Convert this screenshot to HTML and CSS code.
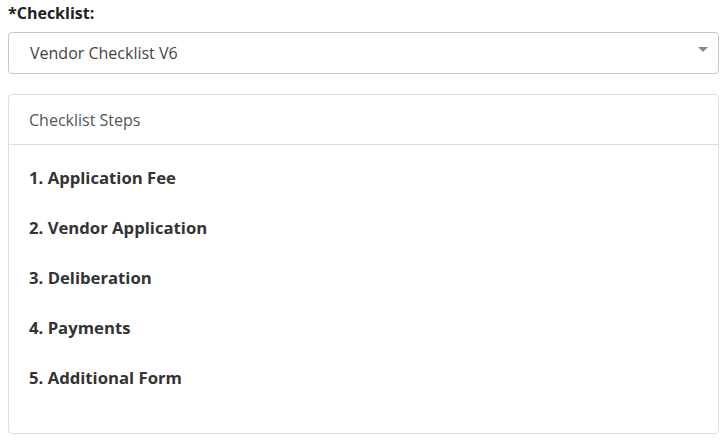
FILE: index.html
```html
<!DOCTYPE html>
<html>
<head>
<meta charset="utf-8">
<link rel="stylesheet" href="styles.css">
</head>
<body>
<div class="field">
  <label class="label">*Checklist:</label>
  <div class="select">
    <span class="select-value">Vendor Checklist V6</span>
    <span class="caret"></span>
  </div>
</div>
<div class="panel">
  <div class="panel-heading">Checklist Steps</div>
  <ul class="steps">
    <li>1. Application Fee</li>
    <li>2. Vendor Application</li>
    <li>3. Deliberation</li>
    <li>4. Payments</li>
    <li>5. Additional Form</li>
  </ul>
</div>
</body>
</html>
```
FILE: styles.css
```css
* { box-sizing: border-box; }
body {
  margin: 0;
  padding: 0 6px 0 8px;
  font-family: "Open Sans", "Noto Sans", sans-serif;
  color: #333;
  background: #fff;
}
.field { display: flex; flex-direction: column; }
.label {
  font-weight: 700;
  font-size: 16px;
  line-height: 26px;
  color: #222;
  height: 32px;
}
.select {
  height: 42px;
  border: 1px solid #c8c8c8;
  border-radius: 4px;
  display: flex;
  align-items: center;
  justify-content: space-between;
  padding: 0 10px 0 21px;
}
.select-value { font-size: 16px; color: #444; }
.caret {
  width: 0; height: 0;
  border-style: solid;
  border-width: 5px 5px 0 5px;
  border-color: #888 transparent transparent transparent;
  margin-top: -8px;
}
.panel {
  margin-top: 20px;
  border: 1px solid #ddd;
  border-radius: 4px;
  height: 340px;
}
.panel-heading {
  height: 50px;
  border-bottom: 1px solid #ddd;
  padding: 0 20px;
  display: flex;
  align-items: center;
  font-size: 16px;
  color: #555;
}
.steps {
  list-style: none;
  margin: 0;
  padding: 7px 20px 0;
}
.steps li {
  height: 50px;
  display: flex;
  align-items: center;
  font-weight: 700;
  font-size: 16.7px;
  color: #333;
}
```
